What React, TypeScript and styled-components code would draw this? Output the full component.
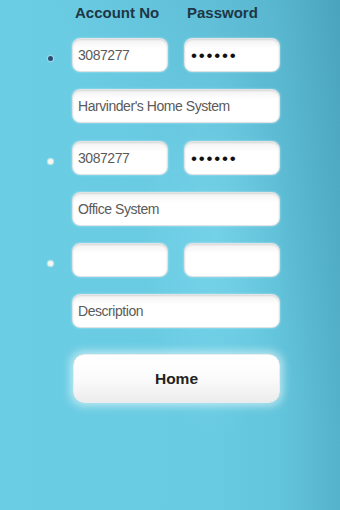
import React from 'react';
import styled, { createGlobalStyle } from 'styled-components';

const GlobalStyle = createGlobalStyle`
  html, body {
    margin: 0;
    padding: 0;
  }
  body {
    font-family: "Liberation Sans", Arial, sans-serif;
  }
`;

const Page = styled.div`
  width: 340px;
  min-height: 510px;
  box-sizing: border-box;
  padding-top: 4px;
  background:
    radial-gradient(ellipse 70px 200px at 215px 240px, rgba(140, 225, 245, 0.35), transparent),
    linear-gradient(to bottom left, rgba(30, 100, 130, 0.2) 0%, rgba(30, 100, 130, 0) 45%),
    linear-gradient(to right, #6bcde4 0%, #69cbe2 62%, #63c5dc 82%, #55b3cb 100%);
`;

const Form = styled.div`
  display: grid;
  grid-template-columns: 56px 96px 96px;
  column-gap: 16px;
  row-gap: 17.2px;
  align-items: center;
`;

const Heading = styled.div`
  font-size: 15px;
  font-weight: bold;
  color: #1e3646;
  line-height: 17px;
  padding-left: 3px;
  height: 17px;
`;

const Spacer = styled.div``;

const Radio = styled.div<{ $checked?: boolean }>`
  justify-self: end;
  margin-right: 3px;
  margin-top: 7px;
  width: 5px;
  height: 5px;
  border-radius: 50%;
  background: ${({ $checked }) => ($checked ? '#2b4d74' : '#f6f6ee')};
  box-shadow: 0 0 1px 1px ${({ $checked }) => ($checked ? 'rgba(180, 220, 235, 0.8)' : 'rgba(255, 255, 240, 0.6)')};
`;

const Field = styled.div<{ $wide?: boolean }>`
  grid-column: ${({ $wide }) => ($wide ? '2 / 4' : 'auto')};
  height: 34px;
  box-sizing: border-box;
  border-radius: 8px;
  border: 1px solid #dfe4e6;
  background: linear-gradient(to bottom, #f2f2f2 0%, #ffffff 30%, #ffffff 100%);
  box-shadow: inset 0 1px 2px rgba(0, 0, 0, 0.12), 0 0 2px rgba(255, 255, 255, 0.6);
  display: flex;
  align-items: center;
  padding-left: 5px;
  font-size: 14px;
  color: #5a5a5a;
  letter-spacing: -0.45px;
  white-space: nowrap;
  overflow: hidden;
`;

const Dots = styled.span`
  font-size: 17px;
  color: #111;
  letter-spacing: 1.8px;
  padding-left: 1px;
  margin-top: 2px;
`;

const ButtonRow = styled.div`
  grid-column: 2 / 4;
  margin-top: 9px;
`;

const HomeButton = styled.button`
  width: 207px;
  margin-left: 1px;
  height: 49px;
  border: 1px solid #e8eef0;
  border-radius: 11px;
  background: linear-gradient(to bottom, #ffffff 0%, #fbfbfb 50%, #ececec 100%);
  box-shadow: 0 0 8px 3px rgba(255, 255, 255, 0.55);
  font-family: "Liberation Sans", Arial, sans-serif;
  font-size: 15.5px;
  font-weight: bold;
  color: #222;
  cursor: pointer;
`;

const accounts = [
  { account: '3087277', password: '••••••', description: "Harvinder's Home System", checked: true },
  { account: '3087277', password: '••••••', description: 'Office System', checked: false },
  { account: '', password: '', description: 'Description', checked: false },
];

export default function App() {
  return (
    <Page>
      <GlobalStyle />
      <Form>
        <Spacer />
        <Heading>Account No</Heading>
        <Heading>Password</Heading>
        {accounts.map((a, i) => (
          <React.Fragment key={i}>
            <Radio $checked={a.checked} />
            <Field>{a.account}</Field>
            <Field>{a.password && <Dots>{a.password}</Dots>}</Field>
            <Spacer />
            <Field $wide>{a.description}</Field>
          </React.Fragment>
        ))}
        <Spacer />
        <ButtonRow>
          <HomeButton>Home</HomeButton>
        </ButtonRow>
      </Form>
    </Page>
  );
}
